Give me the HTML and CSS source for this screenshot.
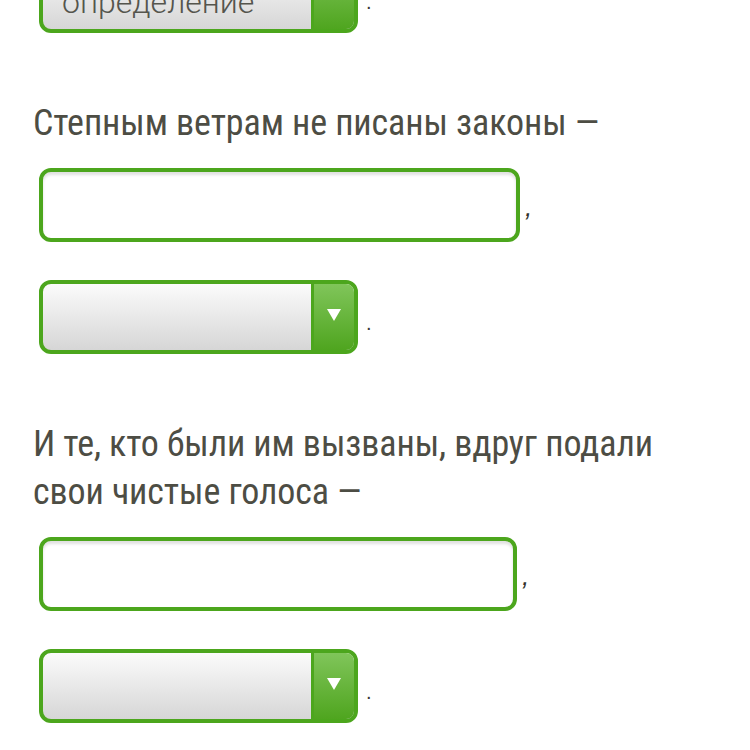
FILE: index.html
```html
<!DOCTYPE html>
<html lang="ru">
<head>
<meta charset="utf-8">
<link rel="stylesheet" href="styles.css">
</head>
<body>
<div class="page">
  <div class="row row-top">
    <div class="select"><span class="select-value">определение</span><span class="select-btn"><span class="arrow"></span></span></div>
    <span class="punct">.</span>
  </div>

  <p class="verse">Степным ветрам не писаны законы —</p>
  <div class="row">
    <div class="field field-a"></div>
    <span class="punct punct-comma">,</span>
  </div>
  <div class="row row-gap">
    <div class="select"><span class="select-value"></span><span class="select-btn"><span class="arrow"></span></span></div>
    <span class="punct">.</span>
  </div>

  <p class="verse">И те, кто были им вызваны, вдруг подали свои чистые голоса —</p>
  <div class="row">
    <div class="field field-b"></div>
    <span class="punct punct-comma">,</span>
  </div>
  <div class="row row-gap">
    <div class="select"><span class="select-value"></span><span class="select-btn"><span class="arrow"></span></span></div>
    <span class="punct">.</span>
  </div>
</div>
</body>
</html>
```

FILE: styles.css
```css
html, body {
  margin: 0;
  padding: 0;
  background: #ffffff;
}

.page {
  padding: 0 50px 0 33px;
  margin-top: -41px;
  font-family: "Roboto Condensed", Roboto, "Liberation Sans", sans-serif;
  font-stretch: condensed;
  color: #4d4d44;
}

.row {
  display: flex;
  align-items: center;
  padding-left: 6px;
}

.row-gap {
  margin-top: 38px;
}

.verse {
  margin: 66px 0 21px 0;
  font-size: 36px;
  line-height: 48px;
  letter-spacing: -0.1px;
}

.field {
  box-sizing: border-box;
  height: 74px;
  border: 4px solid #4ca61d;
  border-radius: 12px;
  background: #ffffff;
  box-shadow: inset 0 3px 3px rgba(0, 0, 0, 0.12);
}

.field-a { width: 481px; }
.field-b { width: 478px; }

.select {
  box-sizing: border-box;
  width: 319px;
  height: 74px;
  border: 4px solid #4ca61d;
  border-radius: 12px;
  display: flex;
  overflow: hidden;
  background: linear-gradient(#fbfbfb, #d6d6d6);
}

.select-value {
  flex: 1;
  padding-left: 19px;
  font-family: Roboto, "Liberation Sans", sans-serif;
  font-stretch: normal;
  font-size: 32px;
  font-weight: 300;
  line-height: 78px;
  color: #55554d;
  white-space: nowrap;
  overflow: hidden;
}

.select-btn {
  width: 40px;
  border-left: 3px solid #4ca61d;
  background: linear-gradient(#80c55a, #4fa51f);
  display: flex;
  align-items: center;
  justify-content: center;
}

.arrow {
  width: 0;
  height: 0;
  border-left: 7px solid transparent;
  border-right: 7px solid transparent;
  border-top: 12px solid #ffffff;
  margin-top: -4px;
}

.punct {
  font-family: "Liberation Sans", sans-serif;
  font-size: 20px;
  line-height: 20px;
  margin-left: 8px;
  margin-top: 12px;
  color: #3a3a34;
}

.punct-comma {
  font-size: 26px;
  line-height: 26px;
  margin-left: 5px;
  margin-top: 4px;
  font-style: italic;
  color: #33332d;
}
```
